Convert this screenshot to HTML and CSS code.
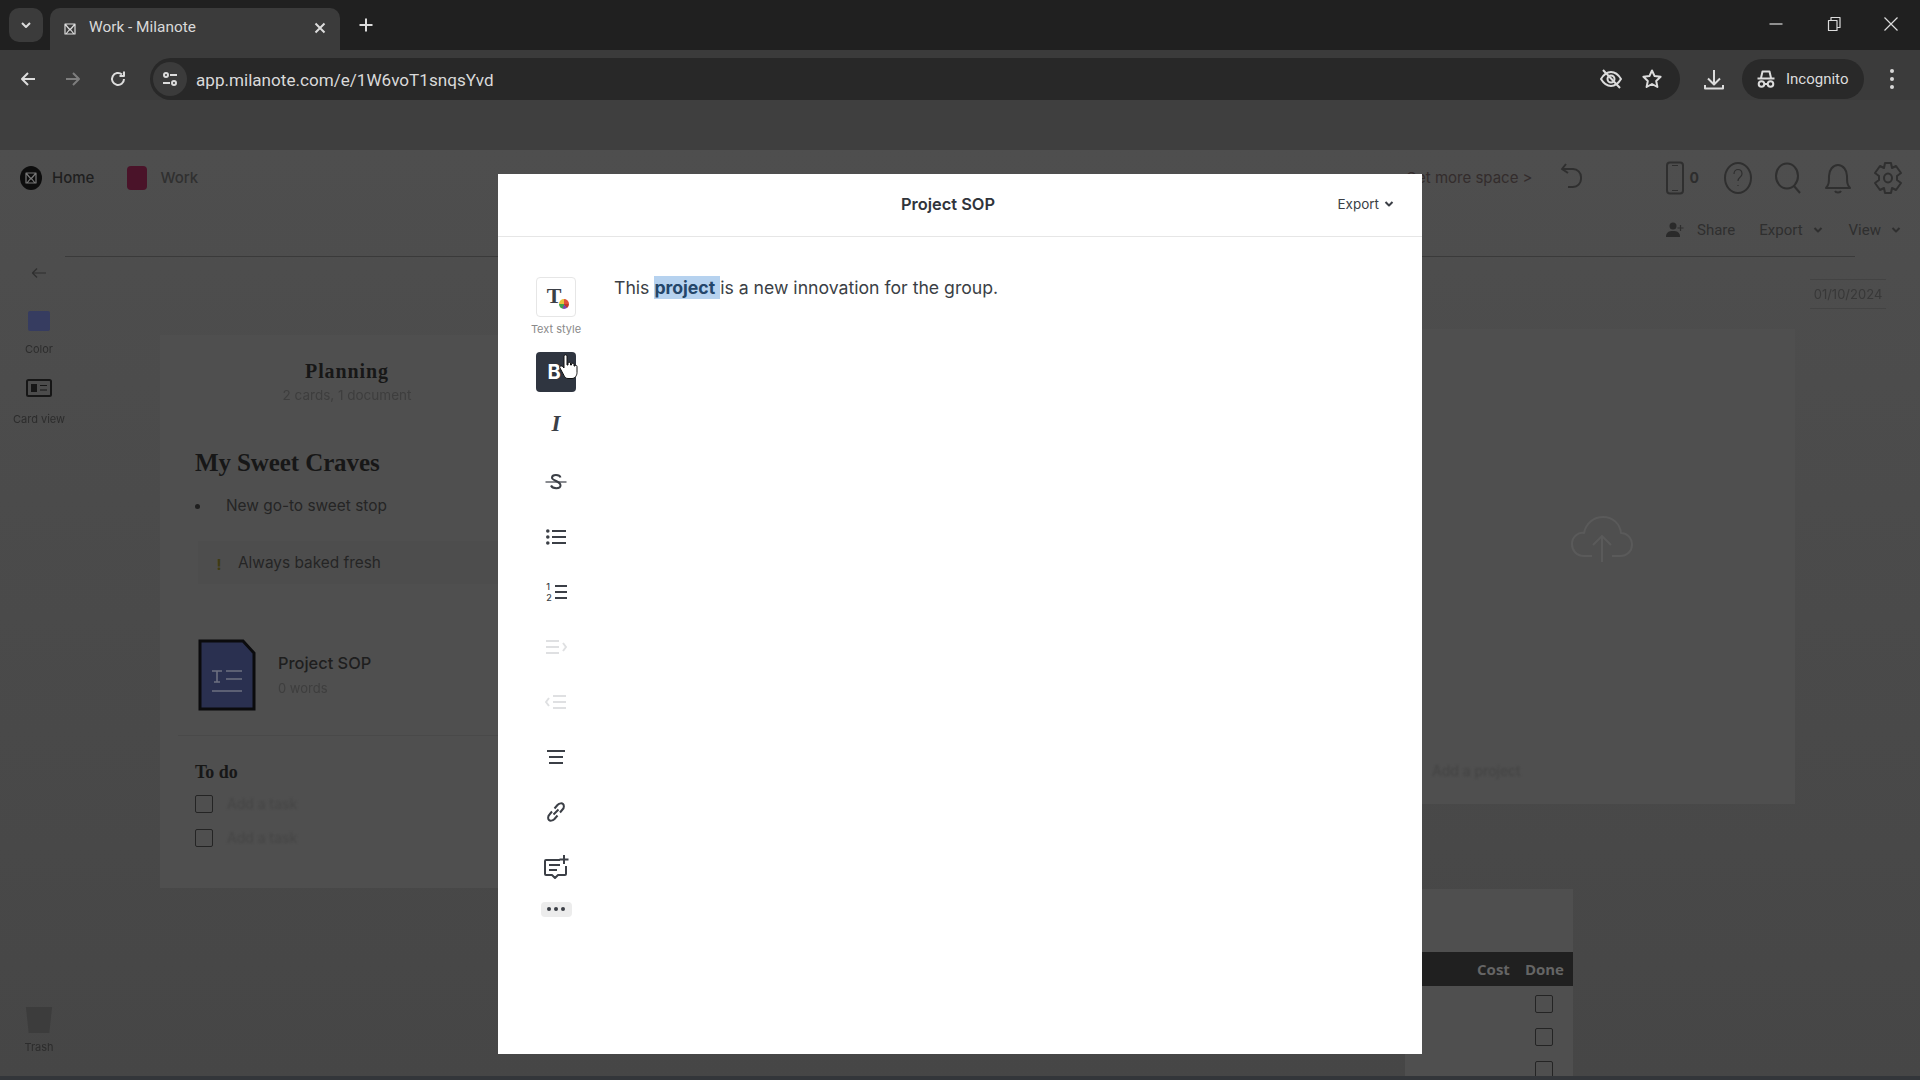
FILE: index.html
```html
<!DOCTYPE html>
<html lang="en">
<head>
<meta charset="utf-8">
<title>Work - Milanote</title>
<link rel="stylesheet" href="styles.css">
</head>
<body>
<div class="page">
  <header class="tabstrip">
    <div class="tabsearch"><svg width="14" height="14" viewBox="0 0 14 14"><path d="M3 5l4 4 4-4" class="s-light s2"/></svg></div>
    <div class="tab">
      <svg class="favicon" width="12" height="12" viewBox="0 0 12 12"><path d="M1 1h10v10H1zM1 1l5 6 5-6M2 11l4-5 4 5" class="s-light s1"/></svg>
      <span class="tabtitle">Work - Milanote</span>
      <svg class="tabclose" width="14" height="14" viewBox="0 0 14 14"><path d="M2.500 2.500l9 9M11.500 2.500l-9 9" class="s-light s2"/></svg>
    </div>
    <svg class="newtab" width="16" height="16" viewBox="0 0 16 16"><path d="M8 1.500v13M1.500 8h13" class="s-light s2"/></svg>
    <div class="winctrls">
      <svg width="16" height="16" viewBox="0 0 16 16"><path d="M1.500 8h13" class="s-light s1"/></svg>
      <svg width="16" height="16" viewBox="0 0 16 16"><path d="M2.500 4.500h8.500v10h-8.500zM5 4.500V1.500h9v10h-3" class="s-light s1"/></svg>
      <svg width="16" height="16" viewBox="0 0 16 16"><path d="M1.500 1.500l13 13M14.500 1.500l-13 13" class="s-light s1"/></svg>
    </div>
  </header>

  <nav class="toolbar">
    <div class="navbtns">
      <svg width="18" height="18" viewBox="0 0 18 18"><path d="M16 9H3M9 3L3 9l6 6" class="s-light s2"/></svg>
      <svg width="18" height="18" viewBox="0 0 18 18"><path d="M2 9h13M9 3l6 6-6 6" class="s-dim s2"/></svg>
      <svg width="18" height="18" viewBox="0 0 18 18"><path d="M15 9a6 6 0 1 1-2-4.500M15 1.500v4.500h-4.500" class="s-light s2"/></svg>
    </div>
    <div class="omnibox">
      <div class="siteinfo"><svg width="18" height="18" viewBox="0 0 18 18"><circle cx="5" cy="5" r="2" class="s-light s2"/><circle cx="13" cy="13" r="2" class="s-light s2"/><path d="M9 5h7M2 13h7" class="s-light s2"/></svg></div>
      <span class="url">app.milanote.com/e/1W6voT1snqsYvd</span>
      <div class="omniicons">
        <svg width="24" height="24" viewBox="0 0 24 24"><path d="M2 12c3-5 6-7 10-7s7 2 10 7c-3 5-6 7-10 7s-7-2-10-7z" class="s-light s2"/><circle cx="12" cy="12" r="3.500" class="s-light s2"/><path d="M4 3l17 18" class="s-light s2"/></svg>
        <svg width="22" height="22" viewBox="0 0 22 22"><path d="M11 2.500l2.600 5.600 6 .7-4.400 4.200 1.200 6L11 16l-5.400 3 1.200-6-4.400-4.200 6-.7z" class="s-light s2"/></svg>
      </div>
    </div>
    <svg class="dl" width="24" height="24" viewBox="0 0 24 24"><path d="M12 3v14M6 11.500l6 6 6-6M3 18v3.500h18V18" class="s-light s2"/></svg>
    <div class="incognito">
      <svg width="20" height="20" viewBox="0 0 20 20"><path d="M5 9l1.500-6.500h7L15 9M1.500 9.500h17" class="s-light s2"/><circle cx="5.500" cy="15" r="2.800" class="s-light s2"/><circle cx="14.500" cy="15" r="2.800" class="s-light s2"/><path d="M8.300 15h3.400" class="s-light s2"/></svg>
      <span>Incognito</span>
    </div>
    <div class="kebab"><i></i><i></i><i></i></div>
  </nav>

  <div class="band"></div>

  <main class="app">
    <div class="appbar">
      <div class="crumb">
        <span class="homelogo"><svg width="12" height="12" viewBox="0 0 12 12"><path d="M1 1h10v10H1zM1 1l5 6 5-6M2 11l4-5 4 5" class="s-logo s1"/></svg></span>
        <span class="crumbtext">Home</span>
      </div>
      <div class="crumb work">
        <span class="workicon"></span>
        <span class="crumbtext muted">Work</span>
      </div>
      <div class="appright">
        <span class="upgrade">Get more space &gt;</span>
        <svg class="undo" width="28" height="32" viewBox="0 0 28 32"><path d="M7 2L3 7l6 4M3 7h11a8 8 0 0 1 8 8v2a8 8 0 0 1-8 8H9" class="s-app s2"/></svg>
        <div class="phone">
          <svg width="20" height="34" viewBox="0 0 20 34"><rect x="2" y="1.500" width="16" height="31" rx="3" class="s-app s2"/><path d="M7 4.500h6M7 29.500h6" class="s-app s1"/></svg>
          <span>0</span>
        </div>
        <svg width="30" height="34" viewBox="0 0 30 34"><ellipse cx="15" cy="17" rx="13" ry="15" class="s-app s2"/><path d="M11 13c0-6 8-6 8 0 0 3-4 3-4 7M15 24v1" class="s-app s1"/></svg>
        <svg width="30" height="34" viewBox="0 0 30 34"><ellipse cx="14" cy="15" rx="11" ry="12.500" class="s-app s2"/><path d="M21 25l6 7" class="s-app s2"/></svg>
        <svg width="30" height="34" viewBox="0 0 30 34"><path d="M3 27c3-3 3-6 3-12 0-6 4-11 9-11s9 5 9 11c0 6 0 9 3 12zM12 30c1 2 5 2 6 0" class="s-app s2"/></svg>
        <svg width="30" height="34" viewBox="0 0 30 34"><path d="M12 2h6l1 5 4-2 5 7-4 3v4l4 3-5 7-4-2-1 5h-6l-1-5-4 2-5-7 4-3v-4l-4-3 5-7 4 2z" class="s-app s2"/><ellipse cx="15" cy="17" rx="4" ry="4.500" class="s-app s2"/></svg>
      </div>
    </div>
    <div class="appsub">
      <div class="subbtn share">
        <svg width="18" height="16" viewBox="0 0 18 16"><circle cx="7" cy="4" r="3.500" class="f-app"/><path d="M0 15c0-5 3-6 7-6s7 1 7 6z" class="f-app"/><path d="M14.500 3v6M11.500 6h6" class="s-app s1"/></svg>
        <span>Share</span>
      </div>
      <div class="subbtn export">
        <span>Export</span>
        <svg width="10" height="8" viewBox="0 0 10 8"><path d="M1.500 2l3.500 3.500L8.500 2" class="s-app s2"/></svg>
      </div>
      <div class="subbtn view">
        <span>View</span>
        <svg width="10" height="8" viewBox="0 0 10 8"><path d="M1.500 2l3.500 3.500L8.500 2" class="s-app s2"/></svg>
      </div>
    </div>

    <div class="workspace">
      <aside class="rail">
        <svg class="railback" width="16" height="12" viewBox="0 0 16 12"><path d="M15 6H2M6 1.500L1.500 6 6 10.500" class="s-app s1"/></svg>
        <span class="swatch"></span>
        <span class="raillabel">Color</span>
        <svg class="cardview" width="26" height="18" viewBox="0 0 26 18"><rect x="1" y="1" width="24" height="16" rx="1.500" class="s-deep s2"/><rect x="5" y="5" width="6" height="8" class="f-deep"/><path d="M14 6.500h7M14 11h7" class="s-deep s1"/></svg>
        <span class="raillabel">Card view</span>
        <div class="railfill"></div>
        <svg class="trash" width="30" height="30" viewBox="0 0 30 30"><path d="M1 1h28l-3 28H4z" class="f-trash"/></svg>
        <span class="raillabel">Trash</span>
      </aside>

      <section class="canvas">
        <article class="column planning">
          <h2 class="coltitle">Planning</h2>
          <p class="colsub soft">2 cards, 1 document</p>
          <h1 class="note-head">My Sweet Craves</h1>
          <div class="bullet"><i></i><span>New go-to sweet stop</span></div>
          <div class="callout"><span class="warn">!</span><span>Always baked fresh</span></div>
          <div class="docrow">
            <svg class="docicon" width="58" height="72" viewBox="0 0 58 72"><path d="M2 2h43l11 12v56H2z" fill="#2a3050" stroke="#0b0b0d" stroke-width="3"/><path d="M14 32h10M19 32v11M16 43h6M28 32h16M28 40h16M14 52h30" stroke="#6d7080" stroke-width="1.600" fill="none"/></svg>
            <div class="docmeta">
              <span class="docname">Project SOP</span>
              <span class="docwords soft">0 words</span>
            </div>
          </div>
          <div class="divider"></div>
          <h3 class="todo-head">To do</h3>
          <div class="task"><span class="box"></span><span class="tasktext soft">Add a task</span></div>
          <div class="task"><span class="box"></span><span class="tasktext soft">Add a task</span></div>
        </article>

        <article class="column uploadcard">
          <svg class="cloud" width="64" height="50" viewBox="0 0 64 50"><path d="M22 42H14C6 42 2 36 2 30c0-7 6-12 12-11C16 9 24 3 33 3c10 0 17 7 18 16 6 0 11 5 11 12 0 6-5 11-12 11h-8" class="s-faint s2"/><path d="M32 48V22M23 31l9-9 9 9" class="s-faint s2"/></svg>
          <span class="addtext soft">Add a project</span>
        </article>

        <div class="dated soft">01/10/2024</div>

        <article class="column tablecard">
          <div class="tablehead"><span>Cost</span><span>Done</span></div>
          <div class="tablerow"><span class="box"></span></div>
          <div class="tablerow"><span class="box"></span></div>
          <div class="tablerow"><span class="box"></span></div>
        </article>
      </section>
    </div>
    <div class="bottomedge"></div>
  </main>

  <div class="modal">
    <div class="modalhead">
      <span class="modaltitle">Project SOP</span>
      <div class="modalexport"><span>Export</span><svg width="10" height="8" viewBox="0 0 10 8"><path d="M1.500 2l3.500 3.500L8.500 2" class="s-ink s2"/></svg></div>
    </div>
    <div class="modalbody">
      <div class="fmtbar">
        <div class="fmt textstyle">
          <span class="tstyle">T</span><span class="wheel"></span>
        </div>
        <span class="fmtlabel">Text style</span>
        <div class="fmt active"><span class="boldb">B</span></div>
        <div class="fmt"><span class="italic">I</span></div>
        <div class="fmt"><svg width="22" height="22" viewBox="0 0 22 22"><path d="M15.500 6.500c-1-3-8-3.500-8.500 0-.5 3.500 8.500 3 8.500 8 0 3.500-8 3.500-9.500 0" class="s-ink s2"/><path d="M0.500 11h21" class="s-ink s1"/></svg></div>
        <div class="fmt"><svg width="20" height="18" viewBox="0 0 20 18"><path d="M6 3h14M6 9h14M6 15h14" class="s-ink s2"/><circle cx="1.800" cy="3" r="1.800" class="f-ink"/><circle cx="1.800" cy="9" r="1.800" class="f-ink"/><circle cx="1.800" cy="15" r="1.800" class="f-ink"/></svg></div>
        <div class="fmt numbered"><span class="nums"><b>1</b><b>2</b></span><svg width="13" height="18" viewBox="0 0 13 18"><path d="M1 3h12M1 9h12M1 15h12" class="s-ink s2"/></svg></div>
        <div class="fmt"><svg width="22" height="18" viewBox="0 0 22 18"><path d="M1 3h13M1 9h13M1 15h13M18 5l3 4-3 4" class="s-off s2"/></svg></div>
        <div class="fmt"><svg width="22" height="18" viewBox="0 0 22 18"><path d="M8 3h13M8 9h13M8 15h13M4 5L1 9l3 4" class="s-off s2"/></svg></div>
        <div class="fmt"><svg width="20" height="18" viewBox="0 0 20 18"><path d="M1 3h18M3 9h14M3 15h14" class="s-ink s2"/></svg></div>
        <div class="fmt"><svg width="22" height="22" viewBox="0 0 22 22"><path d="M9.500 7.500l3-3.500c2-2 4.500-2 5.500-1s1.500 3.500-.5 5.500L15 11.500M12.500 14.500l-3 3.500c-2 2-4.500 2-5.500 1s-1.500-3.500.5-5.500L7 10.500M8.500 13.500l5-5" class="s-ink s2"/></svg></div>
        <div class="fmt"><svg width="26" height="26" viewBox="0 0 26 26"><path d="M17 6H3a1 1 0 0 0-1 1v13a1 1 0 0 0 1 1h6l3 3 3-3h7a1 1 0 0 0 1-1v-8M6 11h11M6 16h8M21 1v9M16.500 5.500h9" class="s-ink s2"/></svg></div>
        <div class="morepill"><i></i><i></i><i></i></div>
      </div>
      <p class="doctext">This <span class="sel"><b>project</b> </span>is a new innovation for the group.</p>
    </div>
  </div>

  <svg class="pointer" width="20" height="26" viewBox="0 0 20 26"><path d="M5 2c0-1.500 3-1.500 3 0v9h1V9c0-1 2.500-1 2.500 0v2h1v-1c0-1 2.500-1 2.500 0v2h1c0-1 2 -1 2 .500v6c0 3-2 6-5 6H9c-2 0-3-1-4-3L1 14c-1-1.500 1-3 2.500-1.500L5 14z" fill="#fff" stroke="#111" stroke-width="1"/></svg>
</div>
</body>
</html>
```

FILE: styles.css
```css
* { box-sizing: border-box; }
html, body { margin: 0; height: 100%; overflow: hidden; background: #474747; }
body { font-family: Inter, "Liberation Sans", sans-serif; }
h1, h2, h3, p { margin: 0; }
svg { display: block; flex: none; }

.s-light, .s-dim, .s-app, .s-deep, .s-faint, .s-ink, .s-off, .s-logo { fill: none; stroke-linejoin: round; }
.s-light { stroke: #dcdcdc; }
.s-dim { stroke: #7d7d7d; }
.s-app { stroke: #2f2f2f; }
.s-deep { stroke: #161616; }
.s-faint { stroke: #5a5a5a; }
.s-ink { stroke: #3b3f46; }
.s-off { stroke: #dfe0e2; }
.s-logo { stroke: #777; }
.s1 { stroke-width: 1.2; }
.s2 { stroke-width: 2; }
.f-app { fill: #2a2a2a; }
.f-deep { fill: #161616; }
.f-ink { fill: #3b3f46; }
.f-trash { fill: #3c3c3c; }

.page { position: relative; width: 1920px; height: 1080px; display: flex; flex-direction: column; overflow: hidden; }

/* browser chrome */
.tabstrip { height: 50px; flex: none; background: #202020; display: flex; align-items: flex-start; padding: 8px 0 0 9px; }
.tabsearch { width: 34px; height: 34px; border-radius: 10px; background: #3b3b3b; display: flex; align-items: center; justify-content: center; }
.tab { width: 290px; height: 42px; margin-left: 7px; background: #3b3b3b; border-radius: 10px 10px 0 0; display: flex; align-items: center; padding: 0 13px 1px 14px; }
.tabtitle { margin: -4px 0 0 13px; flex: 1; color: #d9d9d9; font: 15.400px/20px Roboto, sans-serif; }
.tabclose { margin-top: -2px; }
.newtab { margin: 9px 0 0 18px; }
.winctrls { margin-left: auto; display: flex; gap: 41px; padding: 8px 21px 0 0; }
.winctrls svg:first-child { margin-right: 1px; }

.toolbar { height: 50px; flex: none; background: #3b3b3b; display: flex; align-items: center; padding: 8px 0 0 19px; }
.navbtns { display: flex; gap: 27px; width: 131px; }
.omnibox { width: 1530px; height: 42px; background: #282828; border-radius: 21px; display: flex; align-items: center; padding: 0 17px 0 3px; }
.siteinfo { width: 34px; height: 34px; border-radius: 50%; background: #3b3b3b; display: flex; align-items: center; justify-content: center; }
.url { margin: 2px 0 0 9px; color: #dadada; font: 17.100px/24px Roboto, sans-serif; }
.omniicons { margin-left: auto; display: flex; align-items: center; gap: 18px; }
.dl { margin-left: 22px; }
.incognito { margin-left: 16px; width: 122px; height: 40px; border-radius: 20px; background: #292929; display: flex; align-items: center; gap: 10px; padding-left: 14px; color: #dcdcdc; font: 15px/20px Roboto, sans-serif; }
.kebab { margin-left: 26px; display: flex; flex-direction: column; gap: 4px; }
.kebab i { width: 4px; height: 4px; border-radius: 50%; background: #d8d8d8; }

.band { height: 50px; flex: none; background: #3f3f3f; }

/* dimmed app */
.app { flex: 1; min-height: 0; display: flex; flex-direction: column; background: linear-gradient(#4e4e4e, #464646); }
.appbar { height: 56px; flex: none; display: flex; align-items: center; padding: 0 20px 0 20px; }
.crumb { display: flex; align-items: center; }
.crumbtext { color: #1f1f1f; font: 500 15px/20px Inter, sans-serif; margin-left: 10px; }
.crumbtext.muted { color: #303030; margin-left: 13px; }
.homelogo { width: 22px; height: 24px; border-radius: 50%; background: #0d0d0d; display: flex; align-items: center; justify-content: center; }
.work { margin-left: 33px; }
.workicon { width: 20px; height: 24px; border-radius: 4px; background: #4a1329; }
.appright { margin-left: auto; display: flex; align-items: center; color: #2d2d2d; gap: 20px; padding-right: 0; margin-right: -3px; }
.upgrade { font: 15px/20px Inter, sans-serif; color: #332c2c; margin-right: 6px; }
.undo { margin-right: 58px; }
.phone { display: flex; align-items: center; gap: 5px; font: 700 14px/18px Inter, sans-serif; margin-right: 4px; }

.appsub { height: 51px; flex: none; margin: 0 65px; border-bottom: 1px solid #3a3a3a; display: flex; align-items: center; justify-content: flex-end; color: #2f2f2f; font: 15px/18px Roboto, sans-serif; padding: 0 0 2px; }
.subbtn { display: flex; align-items: center; }
.share { gap: 13px; margin-right: 24px; }
.export { gap: 10px; margin-right: 26px; }
.view { gap: 10px; margin-right: -46px; }

.workspace { flex: 1; min-height: 0; display: flex; }
.rail { width: 65px; padding: 0 0 22px 13px; flex: none; display: flex; flex-direction: column; align-items: center; color: #2c2c2c; filter: blur(.4px); white-space: nowrap; }
.railback { margin: 10px 0 0 0; }
.swatch { width: 22px; height: 20px; border-radius: 2px; margin-top: 32px; background: #363c60; }
.raillabel { font: 11px/14px Inter, sans-serif; margin-top: 11px; }
.cardview { margin-top: 23px; }
.cardview + .raillabel { margin-top: 15px; }
.railfill { flex: 1; }
.trash { margin-bottom: -1px; width: 28px; }
.trash + .raillabel { margin-top: 6px; }

.canvas { flex: 1; position: relative; overflow: hidden; min-width: 0; }
.column { position: absolute; background: #4f4f4f; }
.soft { color: #3e3e3e; filter: blur(.6px); }

.planning { left: 95px; top: 78px; width: 374px; height: 553px; padding: 25px 0 0 35px; color: #1f1f1f; }
.coltitle { text-align: center; margin-left: -35px; font: 700 20px/22px "Liberation Serif", serif; letter-spacing: .9px; color: #171717; }
.colsub { text-align: center; margin: 4px 0 0 -35px; font: 13.500px/18px Inter, sans-serif; }
.note-head { margin-top: 44px; font: 700 25px/30px "Liberation Serif", serif; color: #171717; letter-spacing: -.1px; }
.bullet { margin-top: 17px; display: flex; align-items: center; font: 15.400px/22px Inter, sans-serif; color: #252525; }
.bullet i { width: 5px; height: 5px; border-radius: 50%; background: #1f1f1f; margin: 0 26px 0 0; }
.callout { margin: 24px 0 0 3px; height: 43px; background: #4d4d4d; display: flex; align-items: center; font: 15.400px/20px Inter, sans-serif; color: #252525; padding-left: 14px; }
.warn { width: 14px; margin-right: 12px; text-align: center; font: 700 15px/20px Inter, sans-serif; color: #3f3b12; margin-top: 4px; }
.docrow { margin: 55px 0 0 3px; display: flex; }
.docmeta { margin: 13px 0 0 22px; display: flex; flex-direction: column; }
.docname { font: 500 16.400px/22px Inter, sans-serif; color: #1e1e1e; }
.docwords { font: 13px/18px Inter, sans-serif; margin-top: 5px; }
.divider { height: 1px; margin: 24px 0 0 -17px; background: #494949; }
.todo-head { margin-top: 25px; font: 700 18px/22px "Liberation Serif", serif; color: #171717; }
.task { display: flex; align-items: center; gap: 14px; margin-top: 16px; height: 18px; }
.todo-head + .task { margin-top: 12px; }
.box { width: 18px; height: 18px; border: 1.500px solid #242424; border-radius: 2px; display: block; }
.tasktext { font: 14px/18px Inter, sans-serif; color: #454545; filter: blur(.9px); }

.uploadcard { left: 1300px; top: 72px; width: 430px; height: 475px; padding: 0; }
.cloud { position: absolute; left: 205px; top: 185px; }
.addtext { position: absolute; left: 67px; top: 433px; font: 14px/18px Inter, sans-serif; color: #434343; filter: blur(.9px); }
.dated { position: absolute; left: 1745px; top: 22px; width: 76px; height: 30px; border-top: 1px solid #434343; border-bottom: 1px solid #434343; font: 13px/28px Inter, sans-serif; text-align: center; color: #383838; }

.tablecard { left: 1340px; top: 632px; width: 168px; height: 190px; padding-top: 63px; }
.tablehead { height: 34px; background: #202020; display: flex; justify-content: flex-end; align-items: center; gap: 15px; padding-right: 9px; color: #656565; font: 700 15px/20px "Open Sans", sans-serif; }
.tablerow { height: 33px; display: flex; align-items: center; justify-content: flex-end; padding: 2px 20px 0 0; }

.bottomedge { height: 4px; flex: none; background: #33363a; }

/* modal */
.modal { position: absolute; left: 498px; top: 174px; width: 924px; height: 880px; background: #fff; display: flex; flex-direction: column; color: #3b3f46; }
.modalhead { height: 63px; flex: none; border-bottom: 1px solid #e6e6e6; position: relative; display: flex; align-items: center; justify-content: center; padding: 0 24px 2px 0; }
.modaltitle { font: 600 16.400px/22px Inter, sans-serif; color: #30343b; }
.modalexport { position: absolute; right: 28px; top: 20px; display: flex; align-items: center; gap: 5px; font: 13.500px/20px Inter, sans-serif; }
.modalbody { flex: 1; display: flex; padding: 40px 0 0 38px; }
.fmtbar { width: 40px; flex: none; display: flex; flex-direction: column; align-items: center; }
.fmt { width: 40px; height: 40px; margin-bottom: 15px; display: flex; align-items: center; justify-content: center; border-radius: 4px; flex: none; }
.textstyle { border: 1px solid #e6e6e6; margin-bottom: 5px; border-radius: 4px; position: relative; }
.tstyle { font: 700 22px/24px "Liberation Serif", serif; color: #3b3f46; margin: -2px 4px 0 0; }
.wheel { position: absolute; left: 22px; top: 21px; width: 10px; height: 10px; border-radius: 50%; background: conic-gradient(#e0503c 0 25%, #c0392b 25% 40%, #7b4bb0 40% 55%, #3fa34d 55% 75%, #e8c33c 75% 100%); }
.fmtlabel { font: 11px/14px Inter, sans-serif; color: #8a8a8a; white-space: nowrap; margin-bottom: 15px; height: 14.500px; }
.active { background: #2f3540; color: #fff; }
.boldb { font: 700 20px/24px Inter, sans-serif; margin-left: -4px; }
.italic { font: italic 700 23px/26px "Liberation Serif", serif; color: #3b3f46; margin-top: -5px; }
.numbered { gap: 2px; padding-left: 1px; }
.nums { display: flex; flex-direction: column; font-size: 9px; line-height: 11px; color: #3b3f46; }
.nums b { font-weight: 500; }
.morepill { width: 31px; height: 15px; margin-top: 0; border-radius: 4px; background: #ececec; display: flex; align-items: center; justify-content: center; gap: 3px; }
.morepill i { width: 4px; height: 4px; border-radius: 50%; background: #3b3f46; }
.doctext { margin: -3px 0 0 38px; font: 17.650px/28px Inter, sans-serif; color: #3b3f46; white-space: pre-wrap; }
.sel { background: #b6d2ef; display: inline-block; line-height: 23px; white-space: pre; }
.sel b { color: #24466a; font-weight: 700; }

.pointer { position: absolute; left: 559px; top: 354px; }
```
